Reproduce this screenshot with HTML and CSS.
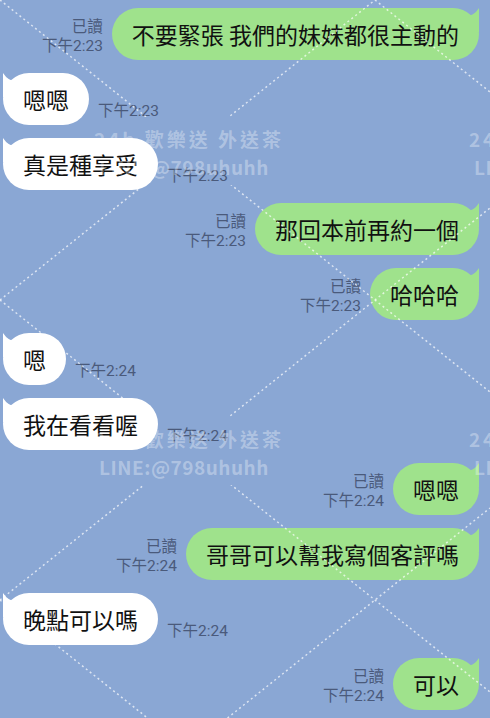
FILE: index.html
```html
<!DOCTYPE html>
<html lang="zh-TW">
<head>
    <meta charset="UTF-8">
    <meta name="viewport" content="width=device-width, initial-scale=1.0">
    <title>聊天</title>
    <link rel="stylesheet" href="styles.css">
</head>
<body>

    <!-- Lista de mensagens -->
    <div class="chat">
        <div class="row out">
            <div class="meta"><span>已讀</span><span>下午2:23</span></div>
            <div class="bubble">不要緊張 我們的妹妹都很主動的</div>
        </div>
        <div class="row in">
            <div class="bubble">嗯嗯</div>
            <div class="meta"><span>下午2:23</span></div>
        </div>
        <div class="row in">
            <div class="bubble">真是種享受</div>
            <div class="meta"><span>下午2:23</span></div>
        </div>
        <div class="row out">
            <div class="meta"><span>已讀</span><span>下午2:23</span></div>
            <div class="bubble">那回本前再約一個</div>
        </div>
        <div class="row out">
            <div class="meta"><span>已讀</span><span>下午2:23</span></div>
            <div class="bubble">哈哈哈</div>
        </div>
        <div class="row in">
            <div class="bubble">嗯</div>
            <div class="meta"><span>下午2:24</span></div>
        </div>
        <div class="row in">
            <div class="bubble">我在看看喔</div>
            <div class="meta"><span>下午2:24</span></div>
        </div>
        <div class="row out">
            <div class="meta"><span>已讀</span><span>下午2:24</span></div>
            <div class="bubble">嗯嗯</div>
        </div>
        <div class="row out">
            <div class="meta"><span>已讀</span><span>下午2:24</span></div>
            <div class="bubble">哥哥可以幫我寫個客評嗎</div>
        </div>
        <div class="row in">
            <div class="bubble">晚點可以嗎</div>
            <div class="meta"><span>下午2:24</span></div>
        </div>
        <div class="row out">
            <div class="meta"><span>已讀</span><span>下午2:24</span></div>
            <div class="bubble">可以</div>
        </div>
    </div>

    <!-- Marca d'água por cima da conversa -->
    <svg class="watermark" width="490" height="718" viewBox="0 0 490 718">
        <defs>
            <mask id="gaps">
                <rect width="490" height="718" fill="#fff"/>
                <rect x="87" y="117" width="200" height="68" fill="#000"/>
                <rect x="462" y="117" width="200" height="68" fill="#000"/>
                <rect x="87" y="417" width="200" height="68" fill="#000"/>
                <rect x="462" y="417" width="200" height="68" fill="#000"/>
            </mask>
        </defs>
        <g class="lines" mask="url(#gaps)">
            <line x1="375" y1="0" x2="490" y2="92"/>
            <line x1="0" y1="0" x2="490" y2="392"/>
            <line x1="0" y1="300" x2="490" y2="692"/>
            <line x1="0" y1="600" x2="147.5" y2="718"/>
            <line x1="0" y1="300" x2="375" y2="0"/>
            <line x1="0" y1="600" x2="490" y2="208"/>
            <line x1="227.5" y1="718" x2="490" y2="508"/>
        </g>
        <g class="mark">
            <text class="slogan" x="189" y="147">24h 歡樂送 外送茶</text>
            <text class="id" x="184" y="175">LINE:@798uhuhh</text>
            <text class="slogan" x="564" y="147">24h 歡樂送 外送茶</text>
            <text class="id" x="559" y="175">LINE:@798uhuhh</text>
            <text class="slogan" x="189" y="447">24h 歡樂送 外送茶</text>
            <text class="id" x="184" y="475">LINE:@798uhuhh</text>
            <text class="slogan" x="564" y="447">24h 歡樂送 外送茶</text>
            <text class="id" x="559" y="475">LINE:@798uhuhh</text>
        </g>
    </svg>

</body>
</html>
```

FILE: styles.css
```css
/* Fundo azul do chat */
body {
    margin: 0;
    background: #8aa7d4;
    font-family: Roboto, "Noto Sans CJK TC", sans-serif;
    position: relative;
    height: 718px;
    overflow: hidden;
}

.chat {
    display: flex;
    flex-direction: column;
    gap: 13px;
    padding: 8px 11px 0 3px;
}

.row {
    display: flex;
    align-items: flex-end;
    gap: 9px;
}

.row.out {
    justify-content: flex-end;
}

/* Balões */
.bubble {
    position: relative;
    height: 52px;
    box-sizing: border-box;
    padding: 0 20px;
    border-radius: 26px;
    font-family: "Noto Sans CJK TC", sans-serif;
    font-size: 23px;
    line-height: 52px;
    color: #111;
    white-space: nowrap;
}

.out .bubble {
    background: #9fe28c;
}

.in .bubble {
    background: #fff;
}

/* Pontinha do balão */
.bubble::after {
    content: "";
    position: absolute;
    top: 0;
    width: 14px;
    height: 24px;
    background: inherit;
}

.out .bubble::after {
    right: 0;
    clip-path: path("M0,9 Q9,8 14,0 L14,24 L0,24 Z");
}

.in .bubble::after {
    left: 0;
    clip-path: path("M14,9 Q5,8 0,0 L0,24 L14,24 Z");
}

/* Lido / horário */
.meta {
    display: flex;
    flex-direction: column;
    font-size: 15.5px;
    line-height: 19px;
    color: #4a5a7b;
    padding-bottom: 4px;
}

.out .meta {
    align-items: flex-end;
}

.watermark {
    position: absolute;
    top: 0;
    left: 0;
    pointer-events: none;
}

.watermark line {
    stroke: rgba(255, 255, 255, 0.7);
    stroke-width: 1.5;
    stroke-dasharray: 2 3;
}

.watermark text {
    fill: rgba(255, 255, 255, 0.33);
    font-family: "Noto Sans CJK TC", sans-serif;
    font-weight: bold;
    font-size: 19px;
    text-anchor: middle;
}

.watermark .slogan {
    letter-spacing: 3px;
}

.watermark .id {
    letter-spacing: 0.5px;
}
```
